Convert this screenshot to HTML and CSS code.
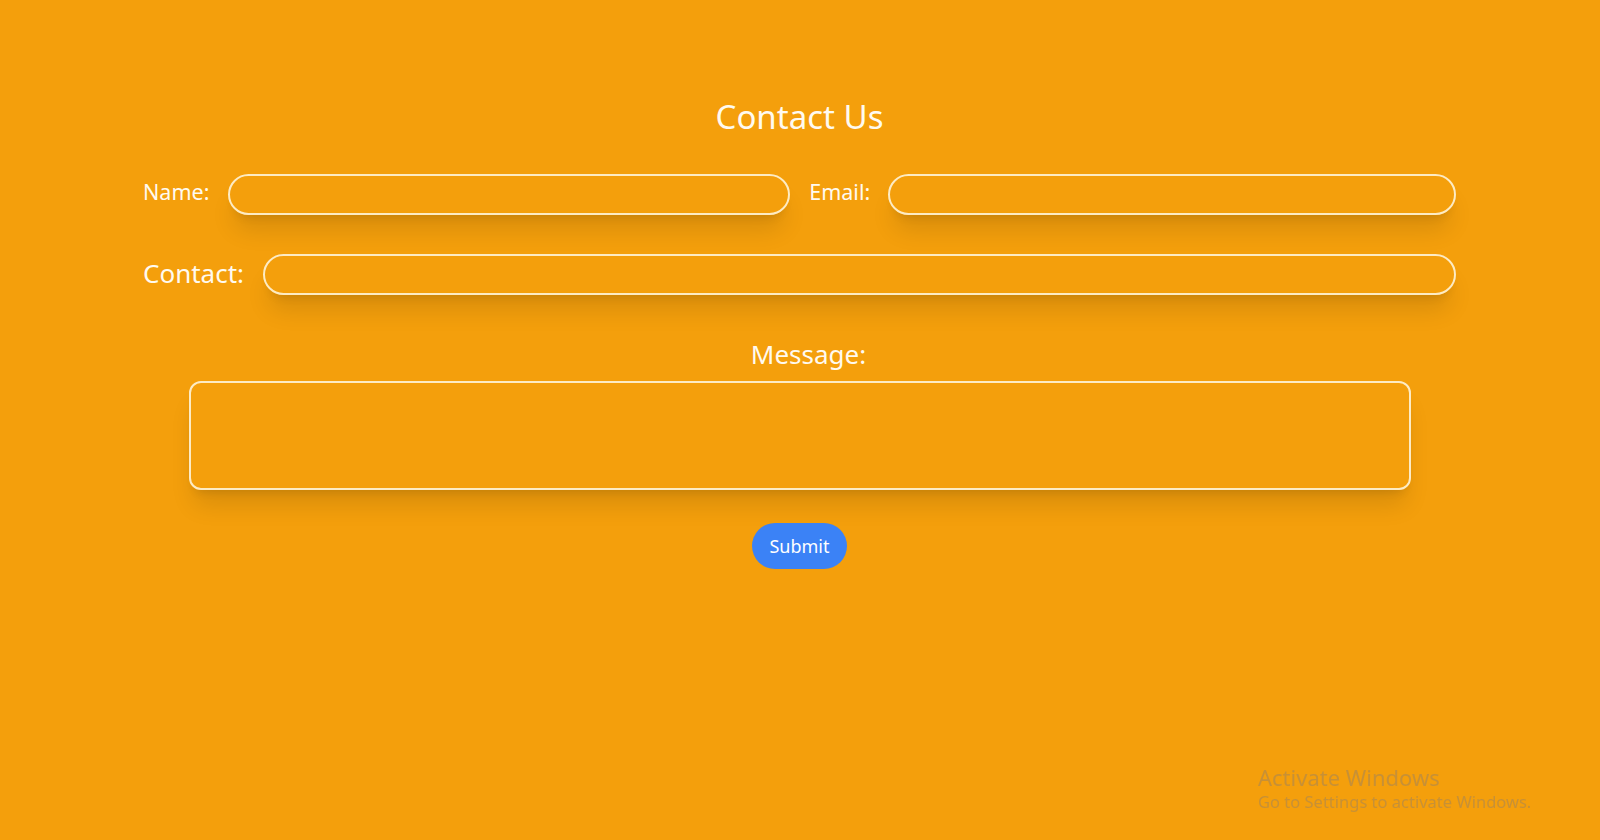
FILE: index.html
```html
<!DOCTYPE html>
<html lang="en">
<head>
<meta charset="utf-8">
<title>Contact Us</title>
<link rel="stylesheet" href="styles.css">
</head>
<body>
<main class="page">
  <h1 class="title">Contact Us</h1>
  <form class="form">
    <div class="row">
      <label class="label" for="name">Name:</label>
      <input class="field field-name" id="name" type="text">
      <label class="label label-email" for="email">Email:</label>
      <input class="field field-email" id="email" type="email">
    </div>
    <div class="row row-contact">
      <label class="label label-lg" for="contact">Contact:</label>
      <input class="field" id="contact" type="text">
    </div>
    <div class="message">
      <label class="label label-lg label-msg" for="message">Message:</label>
      <textarea class="area" id="message"></textarea>
    </div>
    <div class="actions">
      <button class="submit" type="button">Submit</button>
    </div>
  </form>
</main>
<div class="watermark">
  <div class="wm-title">Activate Windows</div>
  <div class="wm-sub">Go to Settings to activate Windows.</div>
</div>
</body>
</html>
```

FILE: styles.css
```css
* { box-sizing: border-box; }
html, body {
  margin: 0;
  padding: 0;
  height: 100%;
}
body {
  background: #f49f0c;
  font-family: "Noto Sans", "Open Sans", sans-serif;
  color: #fffaf0;
  overflow: hidden;
}
.page {
  padding: 95px 144px 0 143px;
}
.title {
  margin: 0;
  text-align: center;
  font-weight: 400;
  font-size: 33px;
  line-height: 44px;
}
.form {
  margin-top: 35px;
}
.row {
  display: flex;
  align-items: center;
}
.row-contact {
  margin-top: 39px;
}
.label {
  font-size: 21.5px;
  white-space: nowrap;
  margin-right: 19px;
  position: relative;
  top: -3px;
}
.label-email {
  margin-left: 19px;
  margin-right: 18px;
}
.label-lg {
  font-size: 26px;
  top: -2px;
}
.field {
  flex: 1 1 0;
  min-width: 0;
  height: 41px;
  border: 2px solid #fdebc4;
  border-radius: 999px;
  background: transparent;
  box-shadow: 0 20px 25px -5px rgba(0,0,0,0.11), 0 8px 10px -6px rgba(0,0,0,0.11);
  outline: none;
}
.field-name {
  flex-grow: 561;
}
.field-email {
  flex-grow: 567;
}
.message {
  margin-top: 42px;
  display: flex;
  flex-direction: column;
  align-items: center;
}
.label-msg {
  margin: 0 0 0 18px;
  line-height: 34px;
  top: 0;
}
.area {
  margin-top: 10px;
  width: 1222px;
  height: 109px;
  border: 2px solid #fdebc4;
  border-radius: 12px;
  background: transparent;
  box-shadow: 0 20px 25px -5px rgba(0,0,0,0.11), 0 8px 10px -6px rgba(0,0,0,0.11);
  resize: none;
  outline: none;
}
.actions {
  display: flex;
  justify-content: center;
  margin-top: 33px;
}
.submit {
  width: 95px;
  height: 46px;
  border: none;
  border-radius: 999px;
  background: #3b82f6;
  color: #ffffff;
  font-family: "Noto Sans", "Open Sans", sans-serif;
  font-size: 18px;
  padding: 0;
}
.watermark {
  position: fixed;
  left: 1258px;
  top: 764px;
  color: rgba(120, 120, 130, 0.36);
  line-height: 1.2;
}
.wm-title {
  font-size: 22px;
}
.wm-sub {
  font-size: 16.5px;
  margin-top: 2px;
}
```
